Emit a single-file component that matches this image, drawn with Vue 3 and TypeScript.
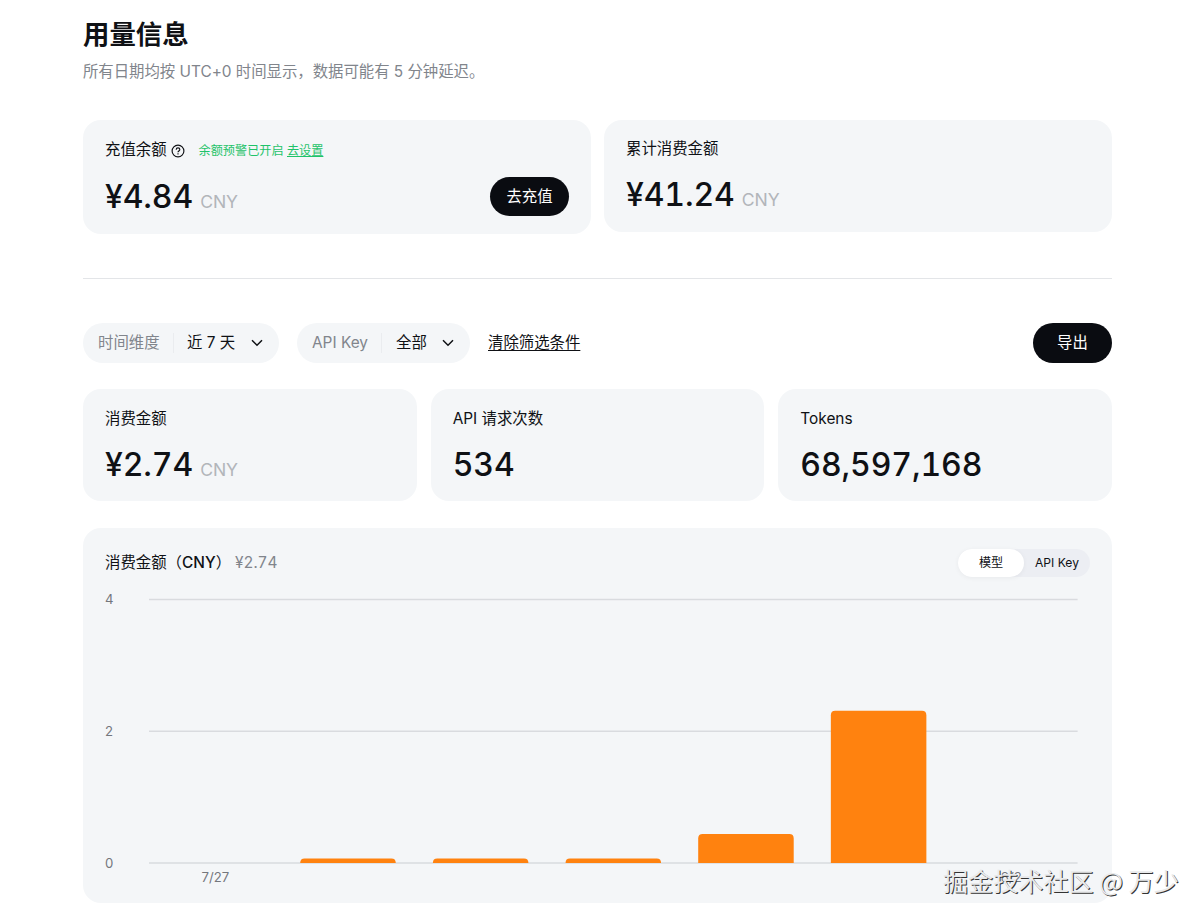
<script setup lang="ts">
interface Stat {
  label: string
  value: string
  unit?: string
}
interface DayCost {
  day: string
  cost: number
}

const stats: Stat[] = [
  { label: '消费金额', value: '¥2.74', unit: 'CNY' },
  { label: 'API 请求次数', value: '534' },
  { label: 'Tokens', value: '68,597,168' },
]

const days: DayCost[] = [
  { day: '7/27', cost: 0 },
  { day: '7/28', cost: 0.07 },
  { day: '7/29', cost: 0.07 },
  { day: '7/30', cost: 0.07 },
  { day: '7/31', cost: 0.44 },
  { day: '8/1', cost: 2.31 },
  { day: '8/2', cost: 0 },
]

const plot = { left: 66, right: 994.6, top: 18.5, bottom: 282, max: 4 }
const step = (plot.right - plot.left) / days.length
const barWidth = step * 0.72
const yOf = (v: number): number => plot.bottom - (v / plot.max) * (plot.bottom - plot.top)
const ticks = [4, 2, 0]
const centre = (i: number): number => plot.left + step * (i + 0.5)

// Bar outline with rounded top corners and a flat base
const barPath = (i: number, cost: number): string => {
  const x0 = centre(i) - barWidth / 2
  const x1 = x0 + barWidth
  const y = yOf(cost)
  const r = Math.min(4.4, plot.bottom - y)
  return `M${x0} ${plot.bottom}V${y + r}Q${x0} ${y} ${x0 + r} ${y}H${x1 - r}Q${x1} ${y} ${x1} ${y + r}V${plot.bottom}Z`
}
const bars = days.map((d, i) => ({ ...d, i })).filter((d) => d.cost > 0)
const axisLabels = [0, 6].map((i) => ({ x: centre(i), text: days[i].day }))
</script>

<template>
  <main class="page">
    <h1 class="title">用量信息</h1>
    <p class="subtitle">所有日期均按 UTC+0 时间显示，数据可能有 5 分钟延迟。</p>

    <section class="balances">
      <div class="card balance">
        <div class="label">
          <span>充值余额</span>
          <svg class="help" viewBox="0 0 14 14" fill="none" stroke="currentColor" stroke-width="1.15">
            <circle cx="7" cy="7" r="5.9" />
            <path d="M5.2 5.7C5.2 4.6 6 3.9 7 3.9s1.8.7 1.8 1.7c0 1.3-1.8 1.4-1.8 2.6" />
            <path d="M7 9.2v1.2" />
          </svg>
          <span class="alert">余额预警已开启 <a class="alert-link">去设置</a></span>
        </div>
        <div class="value-row">
          <div class="value">¥4.84<span class="unit">CNY</span></div>
          <button class="pill-button recharge">去充值</button>
        </div>
      </div>
      <div class="card total">
        <div class="label">累计消费金额</div>
        <div class="value">¥41.24<span class="unit">CNY</span></div>
      </div>
    </section>

    <hr class="divider" />

    <section class="filters">
      <div class="select period">
        <span class="select-name">时间维度</span>
        <span class="select-value">近 7 天</span>
        <svg class="chevron" viewBox="0 0 12 8"><path d="M1 1.2l5 5 5-5" /></svg>
      </div>
      <div class="select key">
        <span class="select-name">API Key</span>
        <span class="select-value">全部</span>
        <svg class="chevron" viewBox="0 0 12 8"><path d="M1 1.2l5 5 5-5" /></svg>
      </div>
      <a class="clear">清除筛选条件</a>
      <button class="pill-button export">导出</button>
    </section>

    <section class="stats">
      <div v-for="s in stats" :key="s.label" class="card stat">
        <div class="label">{{ s.label }}</div>
        <div class="value">{{ s.value }}<span v-if="s.unit" class="unit">{{ s.unit }}</span></div>
      </div>
    </section>

    <section class="card chart">
      <header class="chart-head">
        <span class="chart-title">消费金额（<b class="currency">CNY</b>）</span>
        <span class="chart-sum">¥2.74</span>
        <div class="toggle">
          <span class="toggle-item active">模型</span>
          <span class="toggle-item">API Key</span>
        </div>
      </header>
      <svg class="plot" viewBox="0 0 1029 322" width="1029" height="322">
        <g v-for="t in ticks" :key="t">
          <line class="grid" :x1="plot.left" :x2="plot.right" :y1="yOf(t)" :y2="yOf(t)" />
          <text class="tick" x="22" :y="yOf(t) + 4.8">{{ t }}</text>
        </g>
        <path v-for="b in bars" :key="b.day" class="bar" :d="barPath(b.i, b.cost)" />
        <text v-for="l in axisLabels" :key="l.text" class="tick" text-anchor="middle" :x="l.x" y="300.5">{{ l.text }}</text>
      </svg>
    </section>

    <div class="watermark">掘金技术社区 @ 万少</div>
  </main>
</template>

<style>
body {
  margin: 0;
  background: #fff;
  overflow: hidden;
}
</style>

<style scoped>
.page {
  position: relative;
  box-sizing: border-box;
  width: 1204px;
  height: 921px;
  padding: 16px 92px 0 83px;
  overflow: hidden;
  background: #fff;
  color: #0f1115;
  font-family: Inter, "Noto Sans CJK SC", sans-serif;
  font-size: 15.4px;
  line-height: 24px;
}
.title {
  margin: 0;
  font-size: 26.4px;
  line-height: 36px;
  font-weight: 700;
}
.subtitle {
  margin: 8px 0 0;
  color: #81858c;
  letter-spacing: -0.02px;
}
.balances {
  display: flex;
  align-items: flex-start;
  gap: 13px;
  margin-top: 36px;
}
.card {
  box-sizing: border-box;
  border-radius: 18px;
  background: #f4f6f8;
}
.balance,
.total {
  width: 508px;
  padding: 17px 22px 0;
}
.balance {
  height: 114px;
  padding-top: 18px;
}
.total {
  height: 112px;
}
.label {
  display: flex;
  align-items: center;
  height: 24px;
}
.help {
  width: 14px;
  height: 14px;
  margin: 1px 0 0 4px;
}
.alert {
  margin: 1px 0 0 14px;
  color: #1fc36a;
  font-size: 12.15px;
}
.alert-link {
  text-decoration: underline;
  text-underline-offset: 1px;
}
.value-row {
  display: flex;
  align-items: center;
  justify-content: space-between;
  height: 40px;
  margin-top: 14px;
}
.value {
  font-size: 32px;
  line-height: 40px;
  font-weight: 500;
  font-variant-numeric: tabular-nums;
  letter-spacing: -0.1px;
  white-space: nowrap;
}
.value-row .value {
  padding-top: 6px;
}
.total .value,
.stat .value {
  margin-top: 14px;
}
.unit {
  margin-left: 7px;
  color: #b2b5ba;
  font-size: 17.6px;
  font-weight: 400;
}
.pill-button {
  box-sizing: border-box;
  width: 79px;
  height: 39px;
  padding: 0;
  border: 0;
  border-radius: 20px;
  background: #0a0c11;
  color: #fff;
  font: inherit;
}
.recharge {
  padding-top: 2px;
}
.divider {
  height: 1px;
  margin: 44px 0;
  border: 0;
  background: #e3e5e8;
}
.filters {
  display: flex;
  align-items: center;
  height: 40px;
}
.select {
  box-sizing: border-box;
  display: flex;
  align-items: center;
  height: 40px;
  border-radius: 20px;
  background: #f4f6f8;
}
.period {
  width: 196px;
  padding-left: 15px;
}
.key {
  width: 173px;
  margin-left: 18px;
  padding-left: 15px;
}
.select-name {
  box-sizing: border-box;
  height: 20px;
  border-right: 1px solid #eaecef;
  color: #81858c;
  line-height: 20px;
}
.period .select-name {
  width: 76px;
}
.key .select-name {
  width: 70px;
}
.select-value {
  margin-left: 13px;
  white-space: nowrap;
}
.key .select-value {
  margin-left: 14px;
}
.chevron {
  width: 12px;
  height: 8px;
  margin: 0 16px 0 auto;
  fill: none;
  stroke: #0f1115;
  stroke-width: 1.5;
}
.clear {
  margin-left: 18px;
  text-decoration: underline;
  text-underline-offset: 2px;
}
.export {
  height: 40px;
  margin-left: auto;
}
.stats {
  display: grid;
  grid-template-columns: repeat(3, 1fr);
  gap: 14px;
  margin-top: 26px;
}
.stat {
  height: 112px;
  padding: 18px 22px 0;
}
.chart {
  height: 375px;
  margin-top: 27px;
}
.chart-head {
  display: flex;
  align-items: center;
  height: 53px;
  padding: 16px 22px 0;
  box-sizing: border-box;
}
.currency {
  font-weight: 500;
}
.chart-sum {
  margin-left: 4px;
  color: #81858c;
  font-variant-numeric: tabular-nums;
}
.toggle {
  display: flex;
  height: 28px;
  margin-left: auto;
  border-radius: 14px;
  background: #eceef3;
  font-size: 12.1px;
  line-height: 28px;
  text-align: center;
}
.toggle-item {
  width: 66px;
}
.toggle-item.active {
  border-radius: 14px;
  background: #fff;
  box-shadow: 0 1px 5px rgba(15, 17, 21, 0.05);
}
.plot {
  display: block;
}
.grid {
  stroke: #d9dbdf;
  stroke-width: 1.3;
}
.tick {
  fill: #74777d;
  font-size: 13.2px;
}
.bar {
  fill: #ff820f;
}
.watermark {
  position: absolute;
  left: 943px;
  top: 864px;
  color: #e9eaeb;
  font-family: "Noto Sans CJK SC", sans-serif;
  font-size: 25.1px;
  line-height: 32px;
  white-space: nowrap;
  text-shadow: 1px 1px 0 #333;
}
</style>
